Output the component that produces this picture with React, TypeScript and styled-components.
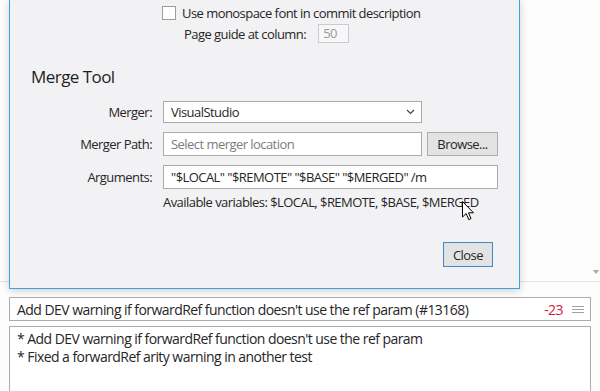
import React from "react";
import styled, { createGlobalStyle } from "styled-components";

const FONT = `"Open Sans", "Noto Sans", sans-serif`;

const Global = createGlobalStyle`
  html, body { margin: 0; padding: 0; background: #fdfdfe; }
  body { font-family: ${FONT}; overflow: hidden; color: #262626; letter-spacing: -0.55px; }
  * { box-sizing: border-box; }
`;

const Screen = styled.div`
  position: relative;
  width: 600px;
  height: 391px;
  overflow: hidden;
  display: flex;
  flex-direction: column;
  background: #fdfdfe;
`;

const TopPane = styled.div`
  position: relative;
  flex: none;
  height: 282px;
  border-bottom: 1px solid #e4e4e7;
`;

const ScrollArrow = styled.div`
  position: absolute;
  right: 1px;
  bottom: 7px;
  width: 0;
  height: 0;
  border-left: 3px solid transparent;
  border-right: 3px solid transparent;
  border-top: 4px solid #a8a8a8;
`;

const Dialog = styled.div`
  position: absolute;
  left: 9px;
  top: -1px;
  width: 511px;
  height: 290px;
  background: #f2f2f4;
  border: 1px solid #3aa4dc;
  box-shadow: 0 2px 8px rgba(0, 0, 0, 0.18);
  display: flex;
  flex-direction: column;
  padding: 6px 0 21px 0;
  font-size: 13px;
`;

const CheckRow = styled.label`
  display: flex;
  align-items: center;
  gap: 6px;
  padding-left: 152px;
  height: 14px;
  line-height: 14px;
`;

const CheckBox = styled.span`
  width: 14px;
  height: 14px;
  border: 1px solid #9d9d9d;
  background: #fff;
  flex: none;
`;

const GuideRow = styled.div`
  display: flex;
  align-items: center;
  gap: 12px;
  padding-left: 174px;
  margin-top: 4px;
`;

const SmallInput = styled.div`
  width: 31px;
  height: 19px;
  border: 1px solid #cbcbcd;
  background: #f7f7f8;
  color: #9a9a9a;
  padding-left: 4px;
  line-height: 17px;
`;

const Heading = styled.div`
  padding-left: 21px;
  margin-top: 23px;
  font-size: 17px;
  line-height: 22px;
  color: #1e1e1e;
`;

const Form = styled.div`
  display: flex;
  flex-direction: column;
  gap: 9px;
  margin-top: 13px;
`;

const FormRow = styled.div`
  display: flex;
  align-items: center;
`;

const Label = styled.div`
  width: 142px;
  text-align: right;
  margin-right: 11px;
  flex: none;
`;

const Field = styled.div<{ $w: number; $h?: number; $placeholder?: boolean }>`
  width: ${(p) => p.$w}px;
  height: ${(p) => p.$h ?? 24}px;
  border: 1px solid #ababab;
  background: #fff;
  display: flex;
  align-items: center;
  padding: 0 7px;
  color: ${(p) => (p.$placeholder ? "#7d7d7d" : "#262626")};
  white-space: nowrap;
  overflow: hidden;
`;

const Chevron = styled.svg`
  margin-left: auto;
  margin-right: -1px;
`;

const Spacer = styled.div`
  width: 5px;
  flex: none;
`;

const Button = styled.div<{ $w: number; $primary?: boolean }>`
  width: ${(p) => p.$w}px;
  height: ${(p) => (p.$primary ? 25 : 24)}px;
  background: #e3e3e4;
  border: 1px solid ${(p) => (p.$primary ? "#3f86cc" : "#adadad")};
  box-shadow: ${(p) => (p.$primary ? "inset 0 0 0 1px #e3e3e4" : "none")};
  display: flex;
  align-items: center;
  justify-content: center;
  color: #262626;
  flex: none;
`;

const Help = styled.div`
  padding-left: 153px;
  margin-top: 4px;
  line-height: 18px;
`;

const Footer = styled.div`
  margin-top: auto;
  display: flex;
  justify-content: flex-end;
  padding-right: 26px;
`;

const Cursor = styled.svg`
  position: absolute;
  left: 462px;
  top: 201px;
`;

const CommitArea = styled.div`
  flex: 1;
  display: flex;
  flex-direction: column;
  gap: 5px;
  padding: 15px 9px 0 9px;
  font-size: 14px;
`;

const Summary = styled.div`
  height: 24px;
  border: 1px solid #acacac;
  background: #fff;
  display: flex;
  align-items: center;
  padding: 0 6px 0 7px;
  white-space: nowrap;
  flex: none;
`;

const Count = styled.span`
  margin-left: auto;
  color: #d4173a;
  margin-right: 9px;
`;

const Description = styled.div`
  flex: 1;
  border: 1px solid #acacac;
  border-bottom: none;
  background: #fff;
  padding: 3px 7px;
  line-height: 18px;
  white-space: pre;
`;

export default function App() {
  return (
    <>
      <Global />
      <Screen>
        <TopPane>
          <ScrollArrow />
          <Dialog>
            <CheckRow>
              <CheckBox />
              <span>Use monospace font in commit description</span>
            </CheckRow>
            <GuideRow>
              <span>Page guide at column:</span>
              <SmallInput>50</SmallInput>
            </GuideRow>
            <Heading>Merge Tool</Heading>
            <Form>
              <FormRow>
                <Label>Merger:</Label>
                <Field $w={259} $h={22}>
                  VisualStudio
                  <Chevron width="9" height="6" viewBox="0 0 9 6">
                    <path d="M1 1 L4.5 4.5 L8 1" fill="none" stroke="#444" strokeWidth="1.2" />
                  </Chevron>
                </Field>
              </FormRow>
              <FormRow>
                <Label>Merger Path:</Label>
                <Field $w={259} $placeholder>
                  Select merger location
                </Field>
                <Spacer />
                <Button $w={71}>Browse...</Button>
              </FormRow>
              <FormRow>
                <Label>Arguments:</Label>
                <Field $w={335}>"$LOCAL" "$REMOTE" "$BASE" "$MERGED" /m</Field>
              </FormRow>
            </Form>
            <Help>Available variables: $LOCAL, $REMOTE, $BASE, $MERGED</Help>
            <Footer>
              <Button $w={50} $primary>
                Close
              </Button>
            </Footer>
          </Dialog>
          <Cursor width="13" height="20" viewBox="0 0 13 20">
            <path
              d="M0.5 0.5 L0.5 16 L4.2 12.6 L6.8 18.6 L9 17.6 L6.5 11.8 L11.5 11.8 Z"
              fill="#fff"
              stroke="#000"
              strokeWidth="1"
              strokeLinejoin="miter"
            />
          </Cursor>
        </TopPane>
        <CommitArea>
          <Summary>
            Add DEV warning if forwardRef function doesn't use the ref param (#13168)
            <Count>-23</Count>
            <svg width="12" height="9" viewBox="0 0 12 9">
              <path d="M0 1.5 H12 M0 4.5 H12 M0 7.5 H12" stroke="#a0a0a0" strokeWidth="1" />
            </svg>
          </Summary>
          <Description>
            {"* Add DEV warning if forwardRef function doesn't use the ref param\n* Fixed a forwardRef arity warning in another test"}
          </Description>
        </CommitArea>
      </Screen>
    </>
  );
}
